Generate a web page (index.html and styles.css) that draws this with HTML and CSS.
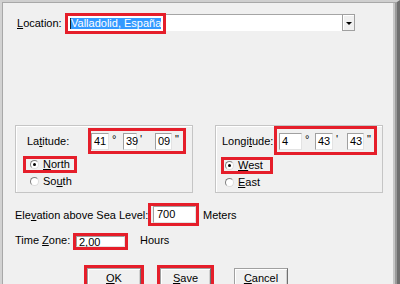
FILE: index.html
```html
<!DOCTYPE html>
<html lang="es">
<head>
    <meta charset="UTF-8">
    <title>Location</title>
    <link rel="stylesheet" href="styles.css">
</head>
<body>
    <div class="window">
        <div class="pane">
            <!-- Location combo -->
            <div class="loc-row">
                <span class="loc-label"><u>L</u>ocation:</span>
                <div class="combo">
                    <div class="combo-field">
                        <span class="sel-wrap mark"><span class="sel">Valladolid, España</span></span>
                    </div>
                    <span class="combo-btn"><span class="arrow"></span></span>
                </div>
            </div>

            <!-- Latitude / Longitude -->
            <div class="groups">
                <div class="group lat">
                    <div class="coord-row">
                        <span class="coord-label">La<u>t</u>itude:</span>
                        <span class="coords mark">
                            <span class="field f1">41</span><span class="unit u1">°</span>
                            <span class="field f2">39</span><span class="unit u2">'</span>
                            <span class="field f3">09</span><span class="unit u3">"</span>
                        </span>
                    </div>
                    <div class="radio-item mark"><span class="radio on"></span><span><u>N</u>orth</span></div>
                    <div class="radio-item second"><span class="radio"></span><span>So<u>u</u>th</span></div>
                </div>
                <div class="group lon">
                    <div class="coord-row">
                        <span class="coord-label">Longi<u>t</u>ude:</span>
                        <span class="coords mark">
                            <span class="field f1">4</span><span class="unit u1">°</span>
                            <span class="field f2">43</span><span class="unit u2">'</span>
                            <span class="field f3">43</span><span class="unit u3">"</span>
                        </span>
                    </div>
                    <div class="radio-item mark"><span class="radio on"></span><span><u>W</u>est</span></div>
                    <div class="radio-item second"><span class="radio"></span><span><u>E</u>ast</span></div>
                </div>
            </div>

            <div class="elev-row">
                <span class="elev-label">Ele<u>v</u>ation above Sea Level:</span>
                <span class="elev-wrap mark"><span class="field elev">700</span></span>
                <span class="after">Meters</span>
            </div>

            <div class="tz-row">
                <span class="tz-label">Time <u>Z</u>one:</span>
                <span class="field tz mark">2,00</span>
                <span class="after hours">Hours</span>
            </div>

            <div class="buttons">
                <span class="btn ok mark"><u>O</u>K</span>
                <span class="btn save mark"><u>S</u>ave</span>
                <span class="btn cancel"><u>C</u>ancel</span>
            </div>
        </div>
    </div>
</body>
</html>
```

FILE: styles.css
```css
* {
    box-sizing: border-box;
}

body {
    margin: 0;
    font-family: "Liberation Sans", Arial, sans-serif;
    font-size: 11px;
    color: #000;
    background: #f0f0f0;
}

/* Window frame */
.window {
    width: 400px;
    height: 284px;
    overflow: hidden;
    background: #f0f0f0;
    border-top: 2px solid #cfcfcf;
    border-left: 2px solid #d2d2d2;
    border-right: 3px solid #6f6f6f;
}

.pane {
    height: 100%;
    border-top: 1px solid #a8a8a8;
    border-left: 1px solid #a8a8a8;
    border-right: 2px solid #9a9a9a;
    box-shadow: inset -2px 0 #c6c6c6;
    padding: 11px 0 0 12px;
}

/* red annotation boxes */
.mark {
    outline: 3px solid #e51e2a;
}

u {
    text-decoration: underline;
}

/* Location */
.loc-row {
    display: flex;
    align-items: center;
    height: 17px;
    padding-left: 2px;
}

.loc-label {
    width: 48px;
}

.combo {
    display: flex;
    width: 290px;
    height: 17px;
}

.combo-field {
    flex: 1;
    display: flex;
    align-items: center;
    background: #fff;
    border-top: 1px solid #a5a5a5;
    border-left: 1px solid #a5a5a5;
    padding-left: 2px;
}

.sel-wrap {
    display: block;
    padding: 2px 2px 2px 3px;
}

.sel {
    display: block;
    line-height: 11px;
    background: #3399ff;
    color: #fff;
    box-shadow: -1px 0 #222;
}

.combo-btn {
    width: 13px;
    display: flex;
    align-items: center;
    justify-content: center;
    background: #f0f0f0;
    border: 1px solid #a0a0a0;
    box-shadow: inset 1px 1px #fff;
}

.arrow {
    width: 0;
    height: 0;
    border-left: 3px solid transparent;
    border-right: 3px solid transparent;
    border-top: 3px solid #000;
    margin-top: 1px;
}

/* Group boxes */
.groups {
    display: flex;
    gap: 22px;
    margin-top: 94px;
}

.group {
    height: 68px;
    border: 1px solid #c5c5c5;
    box-shadow: inset 1px 1px #fff;
}

.lat {
    width: 178px;
    padding: 5px 0 0 11px;
}

.lon {
    width: 168px;
    padding: 3px 0 0 6px;
}

.coord-row {
    display: flex;
    align-items: center;
}

.lat .coord-label {
    width: 64px;
}

.lon .coord-label {
    width: 55px;
}

.coords {
    display: flex;
    align-items: flex-start;
}

.lat .coords {
    padding: 2px 0 1px 0;
}

.lon .coords {
    padding: 4px 0 2px 2px;
}

.field {
    display: block;
    height: 17px;
    background: #fff;
    border: 1px solid;
    border-color: #a0a0a0 #e3e3e3 #e3e3e3 #a0a0a0;
    padding: 0 2px;
    line-height: 15px;
    white-space: nowrap;
}

.unit {
    padding-left: 3px;
    line-height: 13px;
}

.lat .f1 { width: 18px; }
.lat .f2 { width: 14px; }
.lat .f3 { width: 17px; }
.lat .u1 { width: 14px; }
.lat .u2 { width: 18px; }
.lat .u3 { width: 11px; }

.lon .f1 { width: 23px; }
.lon .f2 { width: 18px; }
.lon .f3 { width: 17px; }
.lon .u1 { width: 13px; }
.lon .u2 { width: 14px; }
.lon .u3 { width: 10px; }

/* Radios */
.radio-item {
    display: flex;
    align-items: center;
    gap: 4px;
    height: 11px;
    width: fit-content;
    line-height: 11px;
}

.lat .radio-item {
    margin: 8px 0 0 -1px;
    padding: 0 4px;
}

.lon .radio-item {
    margin: 8px 0 0 2px;
    padding: 0 7px 0 1px;
}

.group .second {
    margin-top: 6px;
}

.radio {
    width: 9px;
    height: 9px;
    border-radius: 50%;
    background: #fff;
    border: 1px solid;
    border-color: #808080 #dcdcdc #dcdcdc #808080;
    display: flex;
    align-items: center;
    justify-content: center;
}

.radio.on::after {
    content: "";
    width: 3px;
    height: 3px;
    border-radius: 50%;
    background: #000;
}

/* Elevation / time zone */
.elev-row,
.tz-row {
    display: flex;
    align-items: center;
    height: 17px;
}

.elev-row {
    margin-top: 13px;
}

.elev-label {
    width: 136px;
}

.elev-wrap {
    display: block;
    padding-left: 2px;
}

.elev {
    width: 43px;
    padding-left: 3px;
}

.after {
    margin-left: 7px;
}

.tz-row {
    margin-top: 8px;
}

.tz-label {
    width: 61px;
}

.tz {
    width: 49px;
    height: 11px;
    line-height: 10px;
    align-self: flex-start;
    margin-top: 5px;
}

.hours {
    margin-left: 15px;
}

/* Buttons */
.buttons {
    display: flex;
    align-items: flex-start;
    margin-top: 20px;
    padding-left: 72px;
}

.btn {
    display: block;
    height: 23px;
    padding-top: 4px;
    line-height: 11px;
    text-align: center;
    background: #f0f0f0;
    border: 1px solid #a0a0a0;
    border-right-color: #707070;
    box-shadow: inset 1px 1px #fff, inset -1px 0 #d0d0d0;
}

.ok {
    width: 54px;
}

.save {
    width: 51px;
    margin-left: 19px;
}

.cancel {
    width: 54px;
    margin-left: 23px;
}
```
